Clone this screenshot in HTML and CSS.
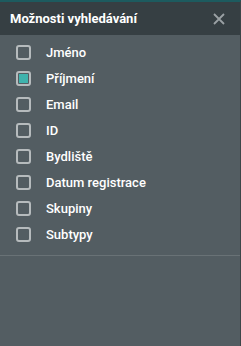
FILE: index.html
```html
<!DOCTYPE html>
<html>
<head>
<meta charset="utf-8">
<link rel="stylesheet" href="styles.css">
</head>
<body>
<div class="panel">
  <div class="header">
    <span class="title">Možnosti vyhledávání</span>
    <svg class="close" width="12" height="12" viewBox="0 0 12 12"><path d="M1 1L11 11M11 1L1 11" stroke="#9aa1a4" stroke-width="1.8"/></svg>
  </div>
  <ul class="list">
    <li class="item"><span class="box"></span><span class="label">Jméno</span></li>
    <li class="item"><span class="box checked"></span><span class="label">Příjmení</span></li>
    <li class="item"><span class="box"></span><span class="label">Email</span></li>
    <li class="item"><span class="box"></span><span class="label">ID</span></li>
    <li class="item"><span class="box"></span><span class="label">Bydliště</span></li>
    <li class="item"><span class="box"></span><span class="label">Datum registrace</span></li>
    <li class="item"><span class="box"></span><span class="label">Skupiny</span></li>
    <li class="item"><span class="box"></span><span class="label">Subtypy</span></li>
  </ul>
</div>
</body>
</html>
```

FILE: styles.css
```css
html, body {
  margin: 0;
  padding: 0;
  height: 100%;
}
body {
  background: #535d62;
  font-family: Roboto, "Liberation Sans", sans-serif;
}
.panel {
  height: 346px;
  box-sizing: border-box;
  border-top: 2px solid #1d5b5f;
  border-right: 1px solid #3d4649;
  background: #535d62;
}
.header {
  height: 33px;
  background: #363f43;
  display: flex;
  align-items: center;
  justify-content: space-between;
  padding: 0 15px 0 10px;
}
.title {
  color: #ffffff;
  font-size: 13px;
  font-weight: 700;
}
.close {
  display: block;
}
.list {
  list-style: none;
  margin: 0;
  padding: 4px 0 8px 0;
  border-bottom: 1px solid #697276;
}
.item {
  height: 26px;
  display: flex;
  align-items: center;
  padding-left: 16px;
}
.box {
  width: 11px;
  height: 11px;
  border: 2px solid #b6bbbd;
  border-radius: 3px;
  box-sizing: content-box;
  margin-right: 15px;
  position: relative;
}
.box.checked::after {
  content: "";
  position: absolute;
  left: 1px;
  top: 1px;
  width: 9px;
  height: 9px;
  background: #3fb3ad;
}
.label {
  color: #ffffff;
  font-size: 13px;
  font-weight: 500;
}
```
